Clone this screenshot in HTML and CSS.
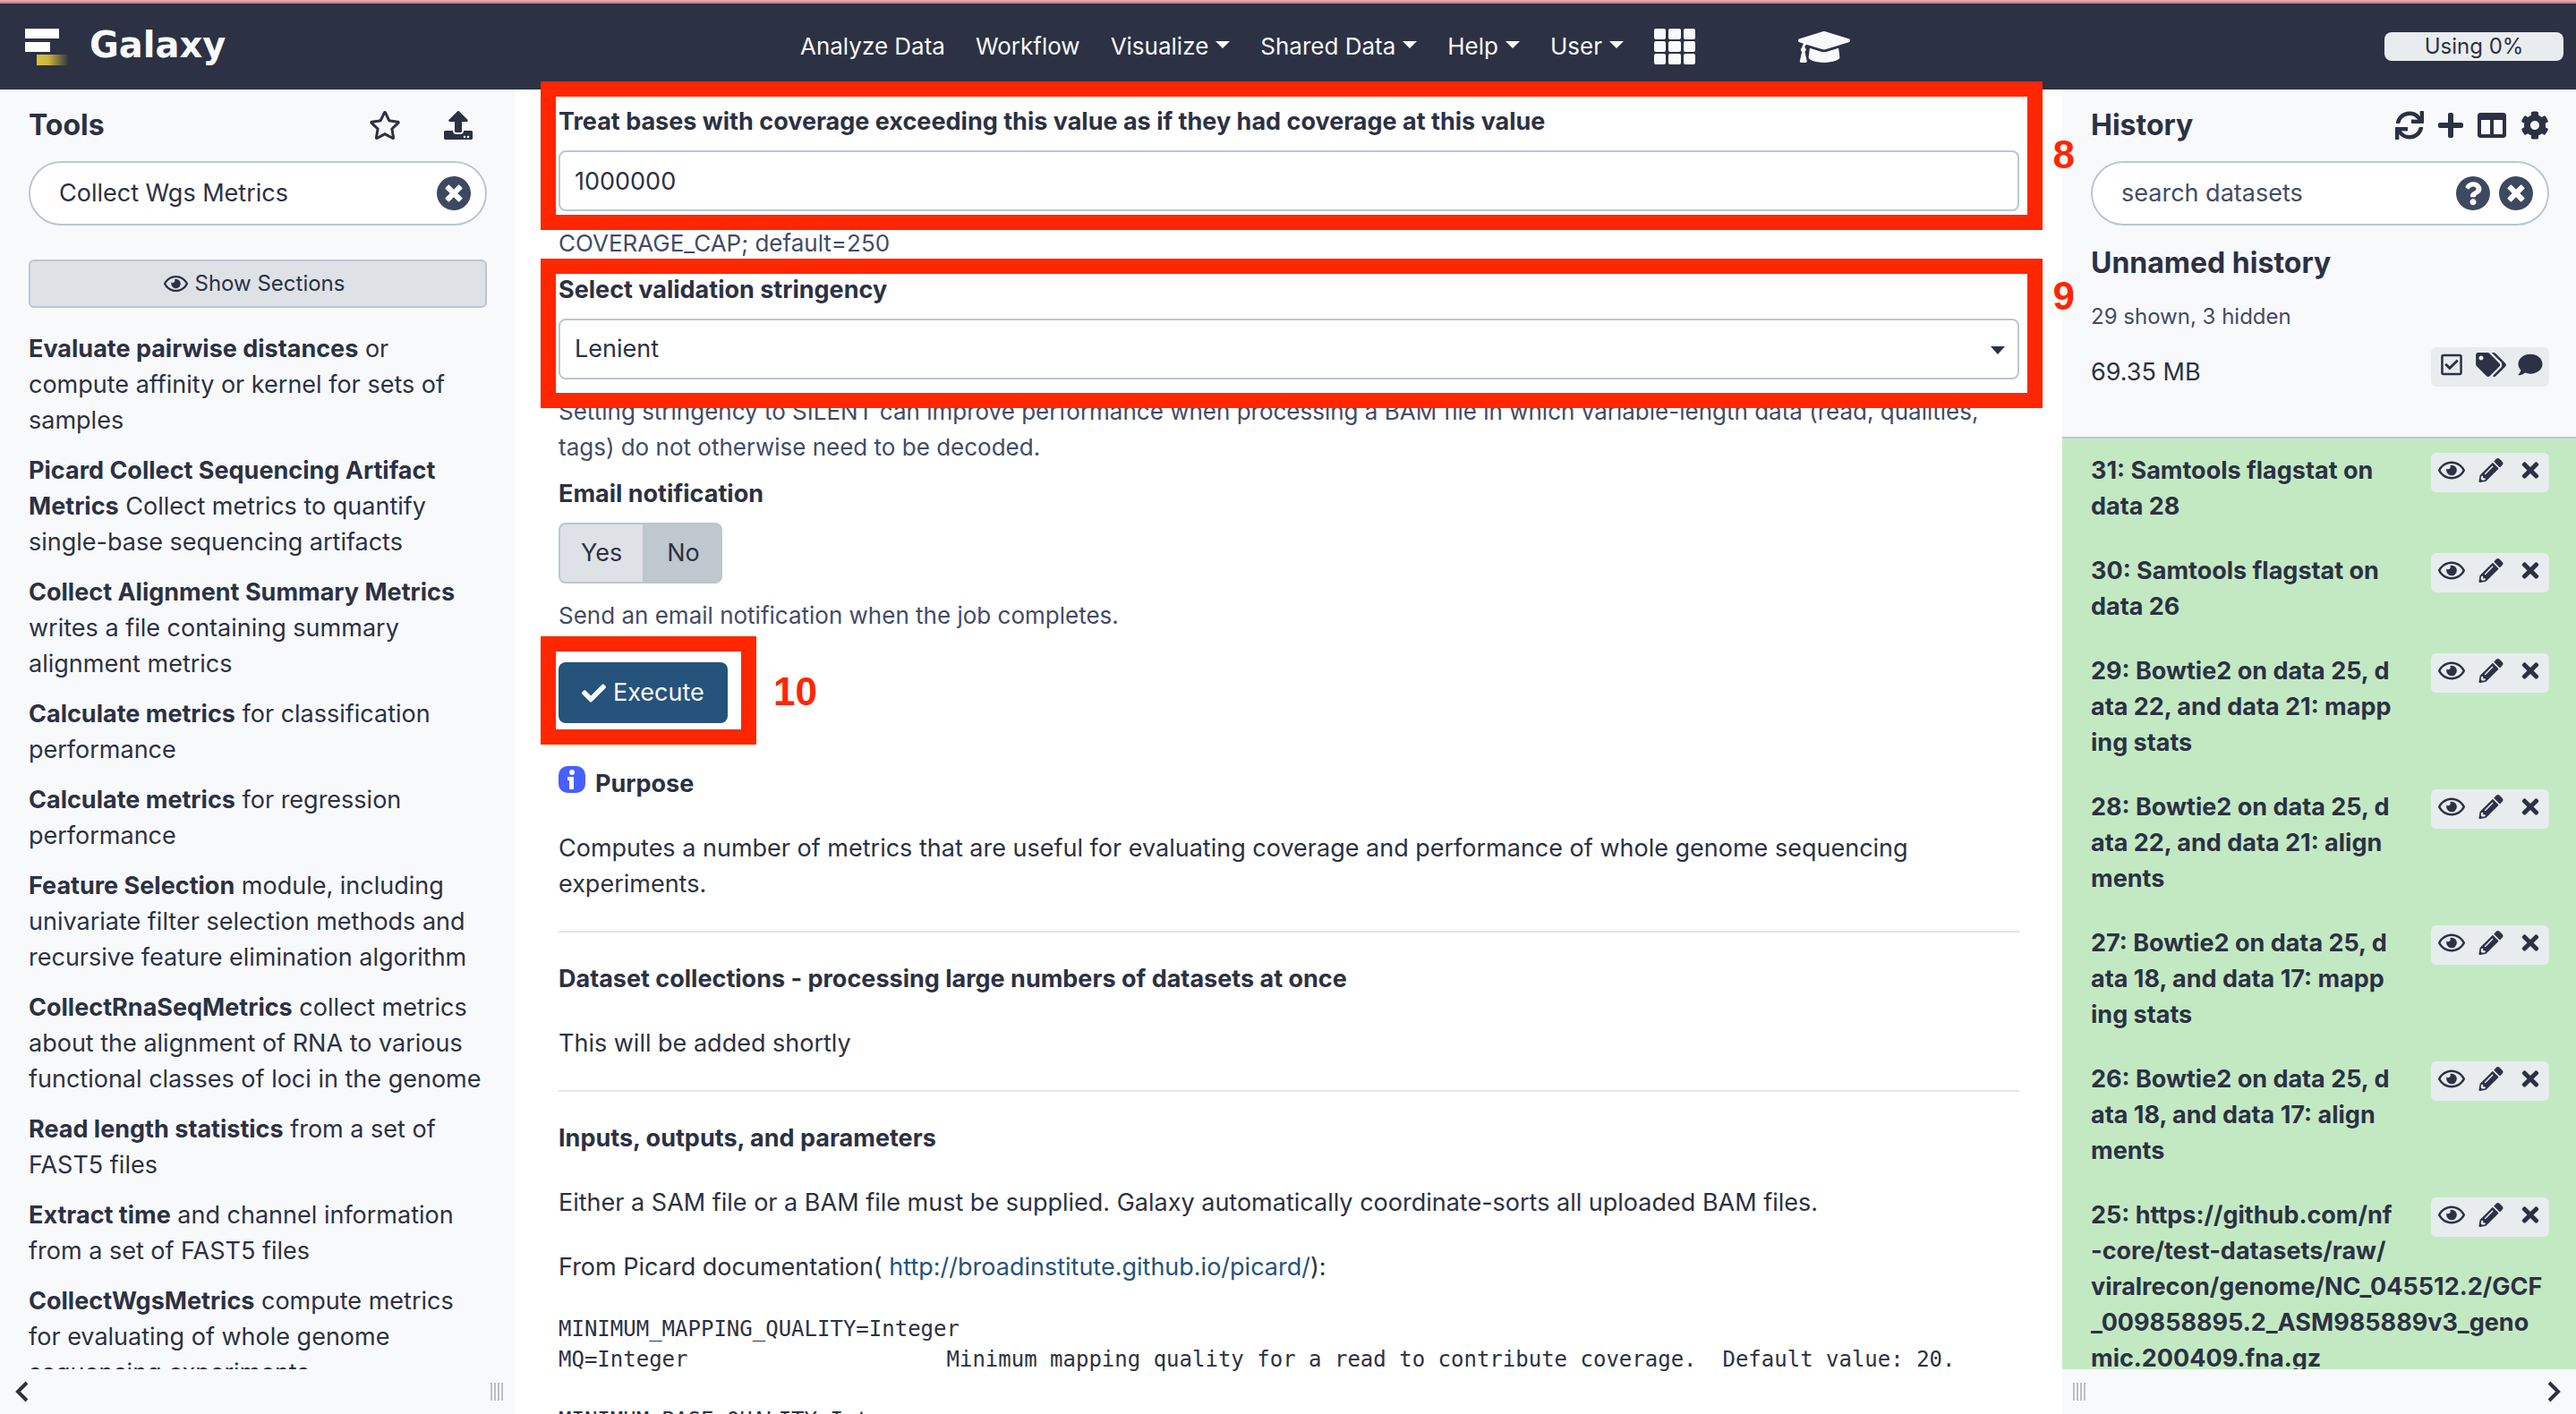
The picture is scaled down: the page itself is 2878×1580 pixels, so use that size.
FILE: index.html
```html
<!DOCTYPE html>
<html lang="en">
<head>
<meta charset="utf-8">
<title>Galaxy</title>
<link rel="stylesheet" href="styles.css">
</head>
<body>
<svg class="sprite" aria-hidden="true">
  <symbol id="star" viewBox="0 0 576 512"><path d="M528.1 171.5L382 150.2 316.7 17.8c-11.7-23.6-45.6-23.9-57.4 0L194 150.2 47.9 171.5c-26.2 3.8-36.7 36.1-17.7 54.6l105.7 103-25 145.5c-4.5 26.3 23.2 46 46.4 33.7L288 439.6l130.7 68.7c23.2 12.2 50.9-7.4 46.4-33.7l-25-145.5 105.7-103c19-18.5 8.5-50.8-17.7-54.6zM388.6 312.3l23.7 138.4L288 385.4l-124.3 65.3 23.7-138.4-100.6-98 139-20.2 62.2-126 62.2 126 139 20.2-100.6 98z"/></symbol>
  <symbol id="upload" viewBox="0 0 512 512"><path d="M296 384h-80c-13.3 0-24-10.7-24-24V192h-87.7c-17.8 0-26.7-21.5-14.1-34.1L242.3 5.7c7.5-7.5 19.8-7.5 27.3 0l152.2 152.2c12.6 12.6 3.7 34.1-14.1 34.1H320v168c0 13.3-10.7 24-24 24zm216-8v112c0 13.3-10.7 24-24 24H24c-13.3 0-24-10.7-24-24V376c0-13.3 10.7-24 24-24h136v8c0 30.9 25.1 56 56 56h80c30.9 0 56-25.1 56-56v-8h136c13.3 0 24 10.7 24 24zm-124 88c0-11-9-20-20-20s-20 9-20 20 9 20 20 20 20-9 20-20zm64 0c0-11-9-20-20-20s-20 9-20 20 9 20 20 20 20-9 20-20z"/></symbol>
  <symbol id="times-circle" viewBox="8 8 496 496"><path d="M256 8C119 8 8 119 8 256s111 248 248 248 248-111 248-248S393 8 256 8zm121.6 313.1c4.7 4.7 4.7 12.3 0 17L338 377.6c-4.7 4.7-12.3 4.7-17 0L256 312l-65.1 65.6c-4.7 4.7-12.3 4.7-17 0L134.4 338c-4.7-4.7-4.7-12.3 0-17l65.6-65-65.6-65.1c-4.7-4.7-4.7-12.3 0-17l39.6-39.6c4.7-4.7 12.3-4.7 17 0l65 65.7 65.1-65.6c4.7-4.7 12.3-4.7 17 0l39.6 39.6c4.7 4.7 4.7 12.3 0 17L312 256l65.6 65.1z"/></symbol>
  <symbol id="question-circle" viewBox="8 8 496 496"><path d="M504 256c0 136.997-111.043 248-248 248S8 392.997 8 256C8 119.083 119.043 8 256 8s248 111.083 248 248zM262.655 90c-54.497 0-89.255 22.957-116.549 63.758-3.536 5.286-2.353 12.415 2.715 16.258l34.699 26.31c5.205 3.947 12.621 3.008 16.665-2.122 17.864-22.658 30.113-35.797 57.303-35.797 20.429 0 45.698 13.148 45.698 32.958 0 14.976-12.363 22.667-32.534 33.976C247.128 238.528 216 254.941 216 296v4c0 6.627 5.373 12 12 12h56c6.627 0 12-5.373 12-12v-1.333c0-28.462 83.186-29.647 83.186-106.667 0-58.002-60.165-102-116.531-102zM256 338c-25.365 0-46 20.635-46 46 0 25.364 20.635 46 46 46s46-20.636 46-46c0-25.365-20.635-46-46-46z"/></symbol>
  <symbol id="eye" viewBox="0 0 576 512"><path d="M288 144a110.94 110.94 0 0 0-31.24 5 55.4 55.4 0 0 1 7.24 27 56 56 0 0 1-56 56 55.4 55.4 0 0 1-27-7.24A111.71 111.71 0 1 0 288 144zm284.52 97.4C518.29 135.59 410.93 64 288 64S57.68 135.64 3.48 241.41a32.35 32.35 0 0 0 0 29.19C57.71 376.41 165.07 448 288 448s230.32-71.64 284.52-177.41a32.35 32.35 0 0 0 0-29.19zM288 400c-98.65 0-189.09-55-237.93-144C98.91 167 189.34 112 288 112s189.09 55 237.93 144C477.1 345 386.66 400 288 400z"/></symbol>
  <symbol id="pencil" viewBox="0 0 512 512"><path d="M497.9 142.1l-46.1 46.1c-4.7 4.7-12.3 4.7-17 0l-111-111c-4.7-4.7-4.7-12.3 0-17l46.1-46.1c18.7-18.7 49.1-18.7 67.9 0l60.1 60.1c18.8 18.7 18.8 49.1 0 67.9zM284.2 99.8L21.6 362.4.4 483.9c-2.9 16.4 11.4 30.6 27.8 27.8l121.5-21.3 262.6-262.6c4.7-4.7 4.7-12.3 0-17l-111-111c-4.8-4.7-12.4-4.7-17.1 0zM124.1 339.9c-5.5-5.5-5.5-14.3 0-19.8l154-154c5.5-5.5 14.3-5.5 19.8 0s5.5 14.3 0 19.8l-154 154c-5.5 5.5-14.3 5.5-19.8 0zM88 424h48v36.3l-64.5 11.3-31.1-31.1L51.7 376H88v48z"/></symbol>
  <symbol id="times" viewBox="0 0 352 512"><path d="M242.72 256l100.07-100.07c12.28-12.28 12.28-32.19 0-44.48l-22.24-22.24c-12.28-12.28-32.19-12.28-44.48 0L176 189.28 75.93 89.21c-12.28-12.28-32.19-12.28-44.48 0L9.21 111.45c-12.28 12.28-12.28 32.19 0 44.48L109.28 256 9.21 356.07c-12.28 12.28-12.28 32.19 0 44.48l22.24 22.24c12.28 12.28 32.2 12.28 44.48 0L176 322.72l100.07 100.07c12.28 12.28 32.2 12.28 44.48 0l22.24-22.24c12.28-12.28 12.28-32.19 0-44.48L242.72 256z"/></symbol>
  <symbol id="check" viewBox="0 0 512 512"><path d="M173.898 439.404l-166.4-166.4c-9.997-9.997-9.997-26.206 0-36.204l36.203-36.204c9.997-9.998 26.207-9.998 36.204 0L192 312.69 432.095 72.596c9.997-9.997 26.207-9.997 36.204 0l36.203 36.204c9.997 9.997 9.997 26.206 0 36.204l-294.4 294.401c-9.998 9.997-26.207 9.997-36.204-.001z"/></symbol>
  <symbol id="sync" viewBox="0 0 512 512"><path d="M440.65 12.57l4 82.77A247.16 247.16 0 0 0 255.83 8C134.73 8 33.91 94.92 12.29 209.82A12 12 0 0 0 24.09 224h49.05a12 12 0 0 0 11.67-9.26 175.91 175.91 0 0 1 317-56.94l-101.46-4.86a12 12 0 0 0-12.57 12v47.41a12 12 0 0 0 12 12H500a12 12 0 0 0 12-12V12a12 12 0 0 0-12-12h-47.37a12 12 0 0 0-11.98 12.57zM255.83 432a175.61 175.61 0 0 1-146-77.8l101.8 4.87a12 12 0 0 0 12.57-12v-47.4a12 12 0 0 0-12-12H12a12 12 0 0 0-12 12V500a12 12 0 0 0 12 12h47.35a12 12 0 0 0 12-12.6l-4.15-82.57A247.17 247.17 0 0 0 255.83 504c121.11 0 221.93-86.92 243.55-201.82a12 12 0 0 0-11.8-14.18h-49.05a12 12 0 0 0-11.67 9.26A175.86 175.86 0 0 1 255.83 432z"/></symbol>
  <symbol id="plus" viewBox="0 0 448 512"><path d="M416 208H272V64c0-17.67-14.33-32-32-32h-32c-17.67 0-32 14.33-32 32v144H32c-17.67 0-32 14.33-32 32v32c0 17.67 14.33 32 32 32h144v144c0 17.67 14.33 32 32 32h32c17.67 0 32-14.33 32-32V304h144c17.67 0 32-14.33 32-32v-32c0-17.67-14.33-32-32-32z"/></symbol>
  <symbol id="columns" viewBox="0 0 512 512"><path d="M464 32H48C21.49 32 0 53.49 0 80v352c0 26.51 21.49 48 48 48h416c26.51 0 48-21.49 48-48V80c0-26.51-21.49-48-48-48zM224 416H64V160h160v256zm224 0H288V160h160v256z"/></symbol>
  <symbol id="cog" viewBox="0 0 512 512"><path d="M487.4 315.7l-42.6-24.6c4.3-23.2 4.3-47 0-70.2l42.6-24.6c4.9-2.8 7.1-8.6 5.5-14-11.1-35.6-30-67.8-54.7-94.6-3.8-4.1-10-5.1-14.8-2.3L380.8 110c-17.9-15.4-38.5-27.3-60.8-35.1V25.8c0-5.6-3.9-10.5-9.4-11.7-36.7-8.2-74.3-7.8-109.2 0-5.5 1.2-9.4 6.1-9.4 11.7V75c-22.2 7.9-42.8 19.8-60.8 35.1L88.7 85.5c-4.9-2.8-11-1.9-14.8 2.3-24.7 26.7-43.6 58.9-54.7 94.6-1.7 5.4.6 11.2 5.5 14L67.3 221c-4.3 23.2-4.3 47 0 70.2l-42.6 24.6c-4.9 2.8-7.1 8.6-5.5 14 11.1 35.6 30 67.8 54.7 94.6 3.8 4.1 10 5.1 14.8 2.3l42.6-24.6c17.9 15.4 38.5 27.3 60.8 35.1v49.2c0 5.6 3.9 10.5 9.4 11.7 36.7 8.2 74.3 7.8 109.2 0 5.5-1.2 9.4-6.1 9.4-11.7v-49.2c22.2-7.9 42.8-19.8 60.8-35.1l42.6 24.6c4.9 2.8 11 1.9 14.8-2.3 24.7-26.7 43.6-58.9 54.7-94.6 1.5-5.5-.7-11.3-5.6-14.1zM256 336c-44.1 0-80-35.9-80-80s35.9-80 80-80 80 35.9 80 80-35.9 80-80 80z"/></symbol>
  <symbol id="comment" viewBox="0 0 512 512"><path d="M256 32C114.6 32 0 125.1 0 240c0 49.6 21.4 95 57 130.7C44.5 421.1 2.7 466 2.2 466.5c-2.2 2.3-2.8 5.7-1.5 8.7S4.8 480 8 480c66.3 0 116-31.8 140.6-51.4 32.7 12.3 69 19.4 107.4 19.4 141.4 0 256-93.1 256-208S397.4 32 256 32z"/></symbol>
  <symbol id="tags" viewBox="0 0 640 512"><path d="M497.941 225.941L286.059 14.059A48 48 0 0 0 252.118 0H48C21.49 0 0 21.49 0 48v204.118a48 48 0 0 0 14.059 33.941l211.882 211.882c18.744 18.745 49.136 18.746 67.882 0l204.118-204.118c18.745-18.745 18.745-49.137 0-67.882zM112 160c-26.51 0-48-21.49-48-48s21.49-48 48-48 48 21.49 48 48-21.49 48-48 48zm513.941 133.823L421.823 497.941c-18.745 18.745-49.137 18.745-67.882 0l-.36-.36L527.64 323.522c16.999-16.999 26.362-39.6 26.362-63.64s-9.362-46.641-26.362-63.64L331.397 0h48.721a48 48 0 0 1 33.941 14.059l211.882 211.882c18.745 18.745 18.745 49.137 0 67.882z"/></symbol>
  <symbol id="check-square" viewBox="0 0 448 512"><path d="M400 32H48C21.49 32 0 53.49 0 80v352c0 26.51 21.49 48 48 48h352c26.51 0 48-21.49 48-48V80c0-26.51-21.49-48-48-48zm0 400H48V80h352v352zm-35.864-241.724L191.547 361.48c-4.705 4.667-12.303 4.637-16.97-.068l-90.781-91.516c-4.667-4.705-4.637-12.303.069-16.971l22.719-22.536c4.705-4.667 12.303-4.637 16.97.069l59.792 60.277 141.352-140.216c4.705-4.667 12.303-4.637 16.97.068l22.536 22.718c4.667 4.706 4.637 12.304-.068 16.971z"/></symbol>
  <symbol id="graduation" viewBox="0 64 640 384"><path d="M622.34 153.2L343.4 67.5c-15.2-4.67-31.6-4.67-46.79 0L17.66 153.2c-23.54 7.23-23.54 38.36 0 45.59l48.63 14.94c-10.67 13.19-17.23 29.28-17.88 46.9C38.78 266.15 32 276.11 32 288c0 10.78 5.68 19.85 13.86 25.65L20.33 428.53C18.11 438.52 25.71 448 35.94 448h56.11c10.24 0 17.84-9.48 15.62-19.47L82.14 313.65C90.32 307.85 96 298.78 96 288c0-11.57-6.47-21.25-15.66-26.87.76-15.02 8.44-28.3 20.69-36.72L296.6 284.5c9.06 2.78 26.44 6.25 46.79 0l278.95-85.7c23.55-7.24 23.55-38.36 0-45.6zM352.79 315.09c-28.53 8.76-52.84 3.92-65.59 0l-145.02-44.55L128 384c0 35.35 85.96 64 192 64s192-28.65 192-64l-14.18-113.47-145.03 44.56z"/></symbol>
  <symbol id="grid" viewBox="0 0 46 40"><path d="M2 0h9a2 2 0 0 1 2 2v8a2 2 0 0 1-2 2h-9a2 2 0 0 1-2-2v-8a2 2 0 0 1 2-2zM18 0h10a2 2 0 0 1 2 2v8a2 2 0 0 1-2 2h-10a2 2 0 0 1-2-2v-8a2 2 0 0 1 2-2zM35 0h9a2 2 0 0 1 2 2v8a2 2 0 0 1-2 2h-9a2 2 0 0 1-2-2v-8a2 2 0 0 1 2-2zM2 14h9a2 2 0 0 1 2 2v8a2 2 0 0 1-2 2h-9a2 2 0 0 1-2-2v-8a2 2 0 0 1 2-2zM18 14h10a2 2 0 0 1 2 2v8a2 2 0 0 1-2 2h-10a2 2 0 0 1-2-2v-8a2 2 0 0 1 2-2zM35 14h9a2 2 0 0 1 2 2v8a2 2 0 0 1-2 2h-9a2 2 0 0 1-2-2v-8a2 2 0 0 1 2-2zM2 28h9a2 2 0 0 1 2 2v8a2 2 0 0 1-2 2h-9a2 2 0 0 1-2-2v-8a2 2 0 0 1 2-2zM18 28h10a2 2 0 0 1 2 2v8a2 2 0 0 1-2 2h-10a2 2 0 0 1-2-2v-8a2 2 0 0 1 2-2zM35 28h9a2 2 0 0 1 2 2v8a2 2 0 0 1-2 2h-9a2 2 0 0 1-2-2v-8a2 2 0 0 1 2-2z"/></symbol>
  <symbol id="chevron-left" viewBox="0 0 16 24"><path d="M13 2L3 12l10 10" fill="none" stroke="currentColor" stroke-width="4"/></symbol>
  <symbol id="chevron-right" viewBox="0 0 16 24"><path d="M3 2l10 10L3 22" fill="none" stroke="currentColor" stroke-width="4"/></symbol>
  <symbol id="grip" viewBox="0 0 16 20"><path d="M1 0v20M5 0v20M9 0v20M13 0v20" stroke="#bfbfbf" stroke-width="2"/></symbol>
</svg>

<header class="masthead">
  <a class="brand" href="#">
    <svg class="brand-mark" viewBox="0 0 50 42" aria-hidden="true">
      <defs><linearGradient id="gold"><stop offset="0" stop-color="#d9c13a"/><stop offset=".35" stop-color="#cdb73c"/><stop offset="1" stop-color="#cdb73c" stop-opacity="0"/></linearGradient></defs>
      <rect y="1" width="38" height="11" fill="#fff"/><rect y="16" width="28" height="11" fill="#fff"/><rect x="13" y="30" width="36" height="12" fill="url(#gold)"/>
    </svg>
    <span class="brand-name">Galaxy</span>
  </a>
  <nav class="menu">
    <a href="#">Analyze Data</a>
    <a href="#">Workflow</a>
    <a class="drop" href="#">Visualize</a>
    <a class="drop" href="#">Shared Data</a>
    <a class="drop" href="#">Help</a>
    <a class="drop" href="#">User</a>
    <a class="menu-grid" href="#" aria-label="Scratchbook"><svg class="icon-grid"><use href="#grid"/></svg></a>
    <a class="menu-cap" href="#" aria-label="Tutorials"><svg class="icon-cap"><use href="#graduation"/></svg></a>
  </nav>
  <div class="quota">Using 0%</div>
</header>

<div class="columns">
  <aside class="panel">
    <div class="panel-body">
      <div class="panel-head">
        <h2>Tools</h2>
        <div class="head-icons head-icons-wide">
          <button class="icon-btn" aria-label="Favorites"><svg class="icon-star"><use href="#star"/></svg></button>
          <button class="icon-btn" aria-label="Upload data"><svg class="icon-lg"><use href="#upload"/></svg></button>
        </div>
      </div>
      <div class="search">
        <input type="text" aria-label="Search tools" value="Collect Wgs Metrics">
        <button class="icon-btn" aria-label="Clear search"><svg class="icon-round"><use href="#times-circle"/></svg></button>
      </div>
      <button class="sections"><svg class="icon-eye"><use href="#eye"/></svg>Show Sections</button>
      <div class="tools">
        <a href="#"><b>Evaluate pairwise distances</b> or compute affinity or kernel for sets of samples</a>
        <a href="#"><b>Picard Collect Sequencing Artifact Metrics</b> Collect metrics to quantify single-base sequencing artifacts</a>
        <a href="#"><b>Collect Alignment Summary Metrics</b> writes a file containing summary alignment metrics</a>
        <a href="#"><b>Calculate metrics</b> for classification performance</a>
        <a href="#"><b>Calculate metrics</b> for regression performance</a>
        <a href="#"><b>Feature Selection</b> module, including univariate filter selection methods and recursive feature elimination algorithm</a>
        <a href="#"><b>CollectRnaSeqMetrics</b> collect metrics about the alignment of RNA to various functional classes of loci in the genome</a>
        <a href="#"><b>Read length statistics</b> from a set of FAST5 files</a>
        <a href="#"><b>Extract time</b> and channel information from a set of FAST5 files</a>
        <a href="#"><b>CollectWgsMetrics</b> compute metrics for evaluating of whole genome sequencing experiments</a>
      </div>
    </div>
    <footer class="panel-foot">
      <button class="icon-btn" aria-label="Collapse tools"><svg class="icon-chev"><use href="#chevron-left"/></svg></button>
      <svg class="icon-grip"><use href="#grip"/></svg>
    </footer>
  </aside>

  <main class="center">
    <div class="center-body">
      <form class="form">
        <div class="field">
          <label for="cap">Treat bases with coverage exceeding this value as if they had coverage at this value</label>
          <input class="control" id="cap" type="text" value="1000000">
          <p class="help">COVERAGE_CAP; default=250</p>
        </div>
        <div class="field">
          <label for="stringency">Select validation stringency</label>
          <div class="select">
            <select class="control" id="stringency"><option>Lenient</option></select>
          </div>
          <p class="help">Setting stringency to SILENT can improve performance when processing a BAM file in which variable-length data (read, qualities, tags) do not otherwise need to be decoded.</p>
        </div>
        <div class="field" role="group" aria-labelledby="email-label">
          <span class="label" id="email-label">Email notification</span>
          <div class="toggle"><button type="button">Yes</button><button type="button" class="on">No</button></div>
          <p class="help">Send an email notification when the job completes.</p>
        </div>
        <button type="button" class="execute"><svg class="icon-check"><use href="#check"/></svg>Execute</button>
      </form>
      <article class="doc">
        <h3><svg class="icon-info" viewBox="0 0 30 30" aria-hidden="true"><rect width="30" height="30" rx="10" fill="#4760ff"/><circle cx="15" cy="7" r="3" fill="#fff"/><path d="M10 12h7v14h-5v-10h-2z" fill="#fff"/></svg>Purpose</h3>
        <p>Computes a number of metrics that are useful for evaluating coverage and performance of whole genome sequencing experiments.</p>
        <hr>
        <h3>Dataset collections - processing large numbers of datasets at once</h3>
        <p>This will be added shortly</p>
        <hr>
        <h3>Inputs, outputs, and parameters</h3>
        <p>Either a SAM file or a BAM file must be supplied. Galaxy automatically coordinate-sorts all uploaded BAM files.</p>
        <p>From Picard documentation( <a href="#">http://broadinstitute.github.io/picard/</a>):</p>
<pre>MINIMUM_MAPPING_QUALITY=Integer
MQ=Integer                    Minimum mapping quality for a read to contribute coverage.  Default value: 20.

MINIMUM_BASE_QUALITY=Integer
</pre>
      </article>
    </div>
    <div class="mark mark-8"></div><span class="mark-no no-8">8</span>
    <div class="mark mark-9"></div><span class="mark-no no-9">9</span>
    <div class="mark mark-10"></div><span class="mark-no no-10">10</span>
  </main>

  <aside class="panel">
    <div class="history-head">
      <div class="panel-head">
        <h2>History</h2>
        <div class="head-icons">
          <button class="icon-btn" aria-label="Refresh"><svg class="icon-lg"><use href="#sync"/></svg></button>
          <button class="icon-btn" aria-label="New history"><svg class="icon-plus"><use href="#plus"/></svg></button>
          <button class="icon-btn" aria-label="View all histories"><svg class="icon-lg"><use href="#columns"/></svg></button>
          <button class="icon-btn" aria-label="History options"><svg class="icon-lg"><use href="#cog"/></svg></button>
        </div>
      </div>
      <div class="search">
        <input type="text" aria-label="Search datasets" placeholder="search datasets">
        <button class="icon-btn" aria-label="Search help"><svg class="icon-round"><use href="#question-circle"/></svg></button>
        <button class="icon-btn" aria-label="Clear search"><svg class="icon-round"><use href="#times-circle"/></svg></button>
      </div>
      <h2 class="history-name">Unnamed history</h2>
      <p class="shown">29 shown, 3 hidden</p>
      <div class="size-row">
        <span>69.35 MB</span>
        <div class="actions">
          <button class="icon-btn" aria-label="Select datasets"><svg><use href="#check-square"/></svg></button>
          <button class="icon-btn" aria-label="Tags"><svg class="icon-tags"><use href="#tags"/></svg></button>
          <button class="icon-btn" aria-label="Annotation"><svg><use href="#comment"/></svg></button>
        </div>
      </div>
    </div>
    <div class="datasets">
      <div class="dataset"><a href="#">31: Samtools flagstat on<br>data 28</a><div class="actions"><button class="icon-btn" aria-label="View"><svg><use href="#eye"/></svg></button><button class="icon-btn" aria-label="Edit"><svg><use href="#pencil"/></svg></button><button class="icon-btn" aria-label="Delete"><svg><use href="#times"/></svg></button></div></div>
      <div class="dataset"><a href="#">30: Samtools flagstat on<br>data 26</a><div class="actions"><button class="icon-btn" aria-label="View"><svg><use href="#eye"/></svg></button><button class="icon-btn" aria-label="Edit"><svg><use href="#pencil"/></svg></button><button class="icon-btn" aria-label="Delete"><svg><use href="#times"/></svg></button></div></div>
      <div class="dataset"><a href="#">29: Bowtie2 on data 25, d<br>ata 22, and data 21: mapp<br>ing stats</a><div class="actions"><button class="icon-btn" aria-label="View"><svg><use href="#eye"/></svg></button><button class="icon-btn" aria-label="Edit"><svg><use href="#pencil"/></svg></button><button class="icon-btn" aria-label="Delete"><svg><use href="#times"/></svg></button></div></div>
      <div class="dataset"><a href="#">28: Bowtie2 on data 25, d<br>ata 22, and data 21: align<br>ments</a><div class="actions"><button class="icon-btn" aria-label="View"><svg><use href="#eye"/></svg></button><button class="icon-btn" aria-label="Edit"><svg><use href="#pencil"/></svg></button><button class="icon-btn" aria-label="Delete"><svg><use href="#times"/></svg></button></div></div>
      <div class="dataset"><a href="#">27: Bowtie2 on data 25, d<br>ata 18, and data 17: mapp<br>ing stats</a><div class="actions"><button class="icon-btn" aria-label="View"><svg><use href="#eye"/></svg></button><button class="icon-btn" aria-label="Edit"><svg><use href="#pencil"/></svg></button><button class="icon-btn" aria-label="Delete"><svg><use href="#times"/></svg></button></div></div>
      <div class="dataset"><a href="#">26: Bowtie2 on data 25, d<br>ata 18, and data 17: align<br>ments</a><div class="actions"><button class="icon-btn" aria-label="View"><svg><use href="#eye"/></svg></button><button class="icon-btn" aria-label="Edit"><svg><use href="#pencil"/></svg></button><button class="icon-btn" aria-label="Delete"><svg><use href="#times"/></svg></button></div></div>
      <div class="dataset"><a href="#">25: https://github.com/nf<br>-core/test-datasets/raw/<br>viralrecon/genome/NC_045512.2/GCF<br>_009858895.2_ASM985889v3_geno<br>mic.200409.fna.gz</a><div class="actions"><button class="icon-btn" aria-label="View"><svg><use href="#eye"/></svg></button><button class="icon-btn" aria-label="Edit"><svg><use href="#pencil"/></svg></button><button class="icon-btn" aria-label="Delete"><svg><use href="#times"/></svg></button></div></div>
    </div>
    <footer class="panel-foot">
      <svg class="icon-grip"><use href="#grip"/></svg>
      <button class="icon-btn" aria-label="Collapse history"><svg class="icon-chev"><use href="#chevron-right"/></svg></button>
    </footer>
  </aside>
</div>
</body>
</html>
```

FILE: styles.css
```css
:root {
  --ink: #2c3143;
  --muted: #434b66;
  --line: #bdc6d0;
  --panel: #f8f9fb;
  --red: #ff2600;
}
* { box-sizing: border-box; }
body {
  margin: 0;
  height: 100vh;
  display: flex;
  flex-direction: column;
  overflow: hidden;
  font: 27px/40px Inter, "Liberation Sans", sans-serif;
  color: var(--ink);
  background: #fff;
}
h2, h3, p, pre { margin: 0; }
h2 { font-size: 32px; font-weight: 700; line-height: 40px; }
h3 { font-size: 27px; font-weight: 700; }
a { color: inherit; text-decoration: none; }
button, input, select { font: inherit; color: inherit; }
svg { display: block; fill: currentColor; }
.sprite { position: absolute; width: 0; height: 0; }
.icon-btn { padding: 0; border: 0; background: none; display: block; }

/* Masthead */
.masthead {
  flex: none;
  height: 100px;
  display: grid;
  grid-template-columns: 1fr auto 1fr;
  align-items: center;
  padding: 2px 14px 0 28px;
  border-top: 2px solid #fb9aa9;
  background: var(--ink);
  box-shadow: inset 0 2px #a98d97;
  color: #f8f9fb;
}
.brand { display: flex; align-items: center; gap: 22px; }
.brand-mark { width: 50px; height: 42px; }
.brand-name { font: 700 40px/48px "DejaVu Sans", sans-serif; padding-bottom: 4px; }
.menu { display: flex; align-items: center; padding-left: 52px; font-size: 26px; }
.menu a { padding: 0 17px; }
.drop { display: flex; align-items: center; gap: 8px; }
.drop::after {
  content: "";
  margin-bottom: 4px;
  border: 8px solid transparent;
  border-top-color: currentColor;
  border-bottom: 0;
}
.icon-grid { width: 46px; height: 40px; }
.menu .menu-cap { padding: 0 0 0 98px; }
.icon-cap { width: 58px; height: 35px; }
.quota {
  justify-self: end;
  width: 200px;
  border-radius: 8px;
  background: #e9ecef;
  color: var(--ink);
  font-size: 24px;
  line-height: 32px;
  text-align: center;
}

/* Columns */
.columns {
  flex: 1;
  min-height: 0;
  display: grid;
  grid-template-columns: 576px minmax(0, 1fr) 574px;
}
.panel {
  min-height: 0;
  display: flex;
  flex-direction: column;
  background: var(--panel);
}
.panel-body { flex: 1; min-height: 0; overflow: hidden; padding: 20px 32px 0; }
.panel-head { display: flex; justify-content: space-between; align-items: center; }
.head-icons { display: flex; align-items: center; gap: 16px; }
.head-icons-wide { gap: 48px; padding-right: 16px; }
.icon-lg { width: 32px; height: 32px; }
.icon-star { width: 36px; height: 32px; }
.icon-plus { width: 28px; height: 32px; }
.icon-round { width: 38px; height: 38px; color: #3f4861; }
.search {
  display: flex;
  align-items: center;
  gap: 10px;
  height: 72px;
  margin-top: 20px;
  padding: 0 16px 0 32px;
  border: 2px solid var(--line);
  border-radius: 36px;
  background: #fff;
}
.search input { flex: 1; min-width: 0; padding: 0; border: 0; outline: 0; background: none; }
.search input::placeholder { color: var(--muted); opacity: 1; }
.sections {
  display: flex;
  align-items: center;
  justify-content: center;
  gap: 8px;
  width: 100%;
  height: 54px;
  margin-top: 38px;
  padding: 0 8px 0 0;
  border: 2px solid var(--line);
  border-radius: 6px;
  background: #dee2e6;
  font-size: 24px;
}
.icon-eye { width: 27px; height: 24px; }
.tools { display: flex; flex-direction: column; gap: 16px; margin-top: 26px; }
.panel-foot {
  flex: none;
  display: flex;
  align-items: center;
  justify-content: space-between;
  height: 50px;
  padding: 0 12px;
}
.icon-chev { width: 18px; height: 24px; margin: 0 4px; }
.icon-grip { width: 16px; height: 20px; }

/* Tool form */
.center { position: relative; min-height: 0; }
.center-body { height: 100%; overflow: hidden; padding: 16px 48px 0; }
.form, .field { display: flex; flex-direction: column; align-items: flex-start; }
.field { margin-bottom: 12px; width: 100%; }
.field label, .label { font-weight: 700; margin-bottom: 12px; }
.control {
  display: block;
  width: 100%;
  height: 68px;
  padding: 0 16px;
  border: 2px solid var(--line);
  border-radius: 8px;
  background: #fff;
  appearance: none;
}
.select { position: relative; width: 100%; }
.select::after {
  content: "";
  position: absolute;
  top: 31px;
  right: 16px;
  border: 8px solid transparent;
  border-top: 9px solid var(--ink);
  border-bottom: 0;
}
.help { margin-top: 16px; font-size: 26px; color: var(--muted); }
.toggle { display: flex; }
.toggle button {
  height: 68px;
  padding: 0 23px;
  border: 2px solid var(--line);
  border-radius: 8px 0 0 8px;
  background: #dee2e6;
}
.toggle .on { border-radius: 0 8px 8px 0; background: #bfc7cf; }
.execute {
  display: flex;
  align-items: center;
  gap: 8px;
  height: 68px;
  margin-top: 20px;
  padding: 0 26px;
  border: 0;
  border-radius: 8px;
  background: #25537b;
  color: #fff;
}
.icon-check { width: 27px; height: 27px; }

/* Tool help */
.doc { display: flex; flex-direction: column; gap: 32px; margin-top: 48px; }
.doc h3 { display: flex; align-items: center; gap: 11px; }
.icon-info { width: 30px; height: 30px; margin-bottom: 10px; }
.doc hr { width: 100%; height: 2px; margin: 0; border: 0; background: #e6e6e7; }
.doc a { color: #25537b; }
.doc pre { font: 24px/34px "DejaVu Sans Mono", monospace; }

/* Step markers */
.mark { position: absolute; z-index: 2; left: 28px; border: 17px solid var(--red); }
.mark-8 { top: -9px; right: 22px; height: 166px; }
.mark-9 { top: 189px; right: 22px; height: 167px; }
.mark-10 { top: 611px; width: 241px; height: 121px; }
.mark-no {
  position: absolute;
  z-index: 2;
  font: 700 44px/44px "Liberation Sans", sans-serif;
  color: var(--red);
}
.no-8 { top: 51px; right: -14px; }
.no-9 { top: 209px; right: -14px; }
.no-10 { top: 651px; left: 288px; }

/* History */
.history-head { flex: none; padding: 20px 30px 52px 32px; border-bottom: 2px solid var(--line); }
.history-name { margin-top: 22px; }
.shown { margin-top: 20px; font-size: 24px; color: var(--muted); }
.size-row { display: flex; align-items: flex-start; justify-content: space-between; margin-top: 14px; }
.size-row span { padding-top: 8px; line-height: 40px; }
.actions {
  flex: none;
  display: grid;
  grid-template-columns: repeat(3, 44px);
  width: 132px;
  height: 44px;
  border-radius: 6px;
  background: #e9ecef;
}
.actions .icon-btn { display: flex; justify-content: center; padding: 6px 0 0 2px; }
.actions svg { width: 30px; height: 27px; }
.actions .icon-tags { width: 34px; }
.datasets { flex: 1; min-height: 0; overflow: hidden; background: #c3e9c3; }
.dataset { display: flex; justify-content: space-between; padding: 16px 30px 16px 32px; font-weight: 700; }
.dataset a { width: 0; white-space: nowrap; }
```
